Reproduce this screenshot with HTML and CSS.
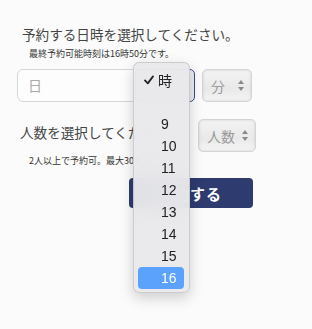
FILE: index.html
```html
<!DOCTYPE html>
<html>
<head>
    <title>予約</title>
    <link rel="stylesheet" href="styles.css">
</head>
<body>
    <div class="container">
        <h2 class="ttl">予約する日時を選択してください。</h2>
        <p class="note">最終予約可能時刻は16時50分です。</p>
        <div class="row">
            <div class="date-input">日</div>
            <div class="hour-select"></div>
            <div class="sel min-sel">分 <span class="arrows"></span></div>
        </div>

        <div class="row2">
            <h2 class="ttl ttl2">人数を選択してください。</h2>
            <div class="sel ppl-sel">人数 <span class="arrows"></span></div>
        </div>
        <p class="note note2">2人以上で予約可。最大30名まで</p>

        <button type="button" class="btn">予約する</button>
    </div>

    <div class="popup">
        <div class="opt first">
            <svg class="chk" width="10" height="10" viewBox="0 0 10 10"><path d="M1 5.4 L3.8 8.4 L9 1.4" fill="none" stroke="#222" stroke-width="1.8" stroke-linecap="round" stroke-linejoin="round"/></svg>時
        </div>
        <div class="opt"></div>
        <div class="opt">9</div>
        <div class="opt">10</div>
        <div class="opt">11</div>
        <div class="opt">12</div>
        <div class="opt">13</div>
        <div class="opt">14</div>
        <div class="opt">15</div>
        <div class="opt active">16</div>
    </div>
</body>
</html>
```
FILE: styles.css
```css
body {
    margin: 0;
    background-color: #fbfbfb;
    font-family: "Noto Sans CJK JP", "Noto Sans", sans-serif;
    width: 312px;
    height: 329px;
    overflow: hidden;
}
.container {
    padding: 24px 0 0 22px;
}
.ttl {
    margin: 0;
    font-size: 13.6px;
    font-weight: normal;
    color: #444;
    line-height: 20px;
    white-space: nowrap;
}
.note {
    margin: 4px 0 0 7px;
    font-size: 9px;
    color: #333;
    line-height: 11px;
    white-space: nowrap;
}
.row {
    display: flex;
    align-items: center;
    margin: 10px 0 0 -5px;
    height: 33px;
}
.date-input {
    box-sizing: border-box;
    width: 140px;
    height: 33px;
    border: 1px solid #d6d6d6;
    border-radius: 6px;
    background: #fdfdfd;
    color: #aaa;
    font-size: 14px;
    line-height: 31px;
    padding-left: 10px;
}
.hour-select {
    box-sizing: border-box;
    width: 60px;
    height: 33px;
    margin-left: -22px;
    border: 1.5px solid #2f4b9a;
    border-radius: 5px;
    background: #ececec;
}
.sel {
    box-sizing: border-box;
    display: flex;
    align-items: center;
    height: 33px;
    border: 1px solid #d4d4d4;
    border-radius: 5px;
    background: linear-gradient(#f3f3f3, #e9e9e9 60%, #f4f4f4);
    box-shadow: inset 0 0 3px rgba(0,0,0,0.12);
    color: #9a9a9a;
    font-size: 14px;
    padding-left: 8px;
}
.min-sel {
    width: 50px;
    margin-left: 7px;
}
.arrows {
    margin-left: auto;
    margin-right: 6px;
    width: 7px;
    height: 11px;
    position: relative;
}
.arrows::before, .arrows::after {
    content: "";
    position: absolute;
    left: 0;
    border-left: 3.5px solid transparent;
    border-right: 3.5px solid transparent;
}
.arrows::before {
    top: 0;
    border-bottom: 4.5px solid #8a8a8a;
}
.arrows::after {
    bottom: 0;
    border-top: 4.5px solid #8a8a8a;
}
.row2 {
    display: flex;
    align-items: flex-start;
    margin: 16px 0 0 -2px;
}
.ttl2 {
    width: 178px;
    overflow: hidden;
    line-height: 28px;
}
.ppl-sel {
    width: 58px;
    margin-top: 1px;
}
.note2 {
    margin-top: 3px;
}
.btn {
    display: block;
    margin: 12px 0 0 107px;
    width: 124px;
    height: 30px;
    border: none;
    border-radius: 4px;
    background-color: #2e3b6f;
    color: white;
    font-family: "Noto Sans CJK JP", sans-serif;
    font-size: 15px;
    font-weight: bold;
    letter-spacing: 1px;
    padding-left: 4px;
}
.popup {
    position: absolute;
    left: 133px;
    top: 62px;
    width: 57px;
    height: 231px;
    box-sizing: border-box;
    padding-top: 6px;
    border: 1px solid rgba(0,0,0,0.13);
    border-radius: 6px;
    background: rgba(233,233,235,0.95);
    backdrop-filter: blur(12px);
    box-shadow: 0 5px 14px rgba(0,0,0,0.18);
}
.opt {
    height: 22px;
    line-height: 22px;
    font-size: 14px;
    color: #222;
    padding-left: 23px;
    margin: 0 5px 0 4px;
    border-radius: 4px;
    font-family: "Liberation Sans", "Noto Sans CJK JP", sans-serif;
}
.first {
    display: flex;
    align-items: center;
    padding-left: 6px;
    font-family: "Noto Sans CJK JP", sans-serif;
}
.chk {
    margin-right: 4px;
}
.active {
    background-color: #5aa2fb;
    color: white;
}
```
